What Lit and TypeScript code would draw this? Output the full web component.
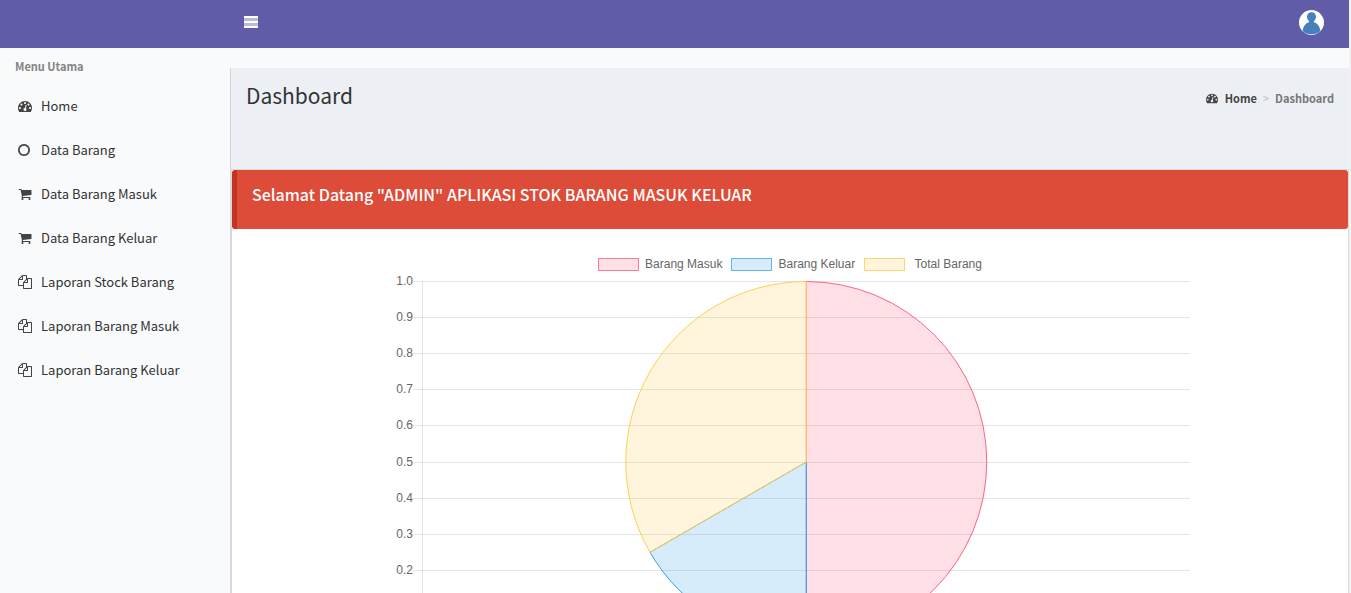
import { LitElement, html, svg, css } from "lit";
import { customElement } from "lit/decorators.js";

const ICONS = {
  dashboard:
    "M384 1152q0-53-37.5-90.5t-90.5-37.5-90.5 37.5-37.5 90.5 37.5 90.5 90.5 37.5 90.5-37.5 37.5-90.5zm192-448q0-53-37.5-90.5t-90.5-37.5-90.5 37.5-37.5 90.5 37.5 90.5 90.5 37.5 90.5-37.5 37.5-90.5zm428 481l101-382q6-26-7.5-48.5t-38.5-29.5-48 6.5-30 39.5l-101 382q-60 5-107 43.5t-63 98.5q-20 77 20 146t117 89 146-20 89-117q16-60-6-117t-72-91zm660-33q0-53-37.5-90.5t-90.5-37.5-90.5 37.5-37.5 90.5 37.5 90.5 90.5 37.5 90.5-37.5 37.5-90.5zm-640-640q0-53-37.5-90.5t-90.5-37.5-90.5 37.5-37.5 90.5 37.5 90.5 90.5 37.5 90.5-37.5 37.5-90.5zm448 192q0-53-37.5-90.5t-90.5-37.5-90.5 37.5-37.5 90.5 37.5 90.5 90.5 37.5 90.5-37.5 37.5-90.5zm320 448q0 261-141 483-19 29-54 29h-1402q-35 0-54-29-141-221-141-483 0-182 71-348t191-286 286-191 348-71 348 71 286 191 191 286 71 348z",
  circle:
    "M768 352q-148 0-273 73t-198 198-73 273 73 273 198 198 273 73 273-73 198-198 73-273-73-273-198-198-273-73zm768 544q0 209-103 385.500t-279.500 279.500-385.500 103-385.500-103-279.500-279.500-103-385.500 103-385.500 279.500-279.500 385.500-103 385.500 103 279.500 279.500 103 385.500z",
  cart:
    "M704 1536q0 52-38 90t-90 38-90-38-38-90 38-90 90-38 90 38 38 90zm896 0q0 52-38 90t-90 38-90-38-38-90 38-90 90-38 90 38 38 90zm128-1088v512q0 24-16.5 42.5t-40.500 21.5l-1044 122q13 60 13 70 0 16-24 64h920q26 0 45 19t19 45-19 45-45 19h-1024q-26 0-45-19t-19-45q0-11 8-31.500t16-36 21.500-40 15.500-29.500l-177-823h-204q-26 0-45-19t-19-45 19-45 45-19h256q16 0 28.500 6.500t19.500 15.500 13 24.500 8 26 5.500 29.500 4.500 26h1201q26 0 45 19t19 45z",
  files:
    "M1696 384q40 0 68 28t28 68v1216q0 40-28 68t-68 28h-960q-40 0-68-28t-28-68v-288h-544q-40 0-68-28t-28-68v-672q0-40 20-88t48-76l408-408q28-28 76-48t88-20h416q40 0 68 28t28 68v328q68-40 128-40h416zm-544 213l-299 299h299v-299zm-640-384l-299 299h299v-299zm196 647l316-316v-416h-384v416q0 40-28 68t-68 28h-416v640h512v-256q0-40 20-88t48-76zm956 804v-1152h-384v416q0 40-28 68t-68 28h-416v640h896z",
};

type IconName = keyof typeof ICONS;

const MENU: { icon: IconName; label: string }[] = [
  { icon: "dashboard", label: "Home" },
  { icon: "circle", label: "Data Barang" },
  { icon: "cart", label: "Data Barang Masuk" },
  { icon: "cart", label: "Data Barang Keluar" },
  { icon: "files", label: "Laporan Stock Barang" },
  { icon: "files", label: "Laporan Barang Masuk" },
  { icon: "files", label: "Laporan Barang Keluar" },
];

const SERIES = [
  { label: "Barang Masuk", value: 3, tone: "pink" },
  { label: "Barang Keluar", value: 1, tone: "blue" },
  { label: "\u00a0Total Barang", value: 2, tone: "yellow" },
];

const icon = (name: IconName) => html`
  <svg class="icon" viewBox="0 0 1792 1792" aria-hidden="true">
    <path d=${ICONS[name]}></path>
  </svg>
`;

@customElement("stock-chart")
export class StockChart extends LitElement {
  static styles = css`
    :host {
      display: block;
      width: 100%;
      max-width: 800px;
      font: 12px/14px "Liberation Sans", Arial, sans-serif;
      color: #666;
    }
    .legend {
      display: flex;
      justify-content: center;
      gap: 9px;
      margin: 0;
      padding: 0;
      list-style: none;
    }
    .entry {
      display: flex;
      gap: 6px;
      white-space: pre;
    }
    .swatch {
      box-sizing: border-box;
      width: 41px;
      height: 13px;
      margin-top: 1px;
      border: 1px solid;
    }
    .swatch.pink {
      background: #ffe0e6;
      border-color: #ff7a97;
    }
    .swatch.blue {
      background: #d7ecfb;
      border-color: #5eb5ef;
    }
    .swatch.yellow {
      background: #fff5dd;
      border-color: #ffd66e;
    }
    .plot {
      display: block;
      width: 100%;
      margin-top: 3px;
    }
    .grid {
      stroke: rgba(0, 0, 0, 0.1);
    }
    .tick {
      fill: #666;
      text-anchor: end;
    }
    .slice.pink {
      fill: rgba(255, 99, 132, 0.2);
      stroke: rgb(255, 99, 132);
    }
    .slice.blue {
      fill: rgba(54, 162, 235, 0.2);
      stroke: rgb(54, 162, 235);
    }
    .slice.yellow {
      fill: rgba(255, 206, 86, 0.2);
      stroke: rgb(255, 206, 86);
    }
  `;

  private slices() {
    const cx = 416.3;
    const cy = 188;
    const r = 180.5;
    const total = SERIES.reduce((sum, s) => sum + s.value, 0);
    let angle = -Math.PI / 2;
    return SERIES.map((s) => {
      const end = angle + (s.value / total) * Math.PI * 2;
      const at = (a: number) => `${cx + r * Math.cos(a)} ${cy + r * Math.sin(a)}`;
      const d = `M${cx} ${cy}L${at(angle)}A${r} ${r} 0 0 1 ${at(end)}Z`;
      angle = end;
      return svg`<path class="slice ${s.tone}" d=${d}></path>`;
    });
  }

  render() {
    const ticks = Array.from({ length: 11 }, (_, i) => ({
      y: 7.5 + Math.round(36.1 * i),
      text: (1 - i / 10).toFixed(1),
    }));
    return html`
      <ul class="legend">
        ${SERIES.map(
          (s) => html`<li class="entry"><span class="swatch ${s.tone}"></span><span>${s.label}</span></li>`
        )}
      </ul>
      <svg class="plot" viewBox="0 0 800 376" role="img" aria-label="Stok barang">
        ${ticks.map(
          (t) => svg`
            <line class="grid" x1="23" x2="800" y1=${t.y} y2=${t.y}></line>
            <text class="tick" x="23" y=${t.y + 3}>${t.text}</text>`
        )}
        <line class="grid" x1="32.5" x2="32.5" y1="7" y2="369"></line>
        ${this.slices()}
      </svg>
    `;
  }
}

@customElement("app-root")
export class AppRoot extends LitElement {
  static styles = css`
    :host {
      display: block;
      box-sizing: border-box;
      height: 100vh;
      padding-right: 2px;
      overflow-y: auto;
      scrollbar-width: none;
      background: #f1f1f1;
      color: #333;
      font: 13px/20px "Noto Sans CJK SC", "Noto Sans", sans-serif;
    }
    * {
      box-sizing: border-box;
    }
    a {
      color: inherit;
      text-decoration: none;
    }
    button {
      display: flex;
      padding: 0;
      border: 0;
      background: none;
      cursor: pointer;
    }
    .icon {
      flex: none;
      width: 14px;
      height: 14px;
      fill: #444;
      overflow: visible;
    }
    .topbar {
      display: flex;
      align-items: center;
      justify-content: space-between;
      height: 48px;
      padding: 0 25px 3px 244px;
      background: #605ca8;
    }
    .bars {
      width: 14px;
      height: 13px;
    }
    .avatar {
      width: 25px;
      height: 25px;
    }
    .body {
      display: grid;
      grid-template-columns: 230px minmax(0, 1fr);
      min-height: calc(100vh - 48px);
      background: #f9fafc;
    }
    .heading {
      margin: 0;
      padding: 8px 15px;
      color: #848484;
      font-size: 11px;
      font-weight: 700;
    }
    .menu {
      margin: 0;
      padding: 0;
      list-style: none;
    }
    .item {
      display: flex;
      align-items: center;
      gap: 9px;
      height: 44px;
      padding: 0 18px;
    }
    .content {
      margin-top: 20px;
      border-left: 1px solid #d2d6de;
      background: #ecf0f5;
    }
    .title {
      display: flex;
      align-items: flex-start;
      justify-content: space-between;
      height: 101px;
      padding: 14px 15px;
    }
    h1 {
      margin: 0;
      font-size: 21px;
      font-weight: 400;
      line-height: 26px;
    }
    .crumbs {
      display: flex;
      align-items: center;
      margin: 6px 0 0;
      padding: 0;
      list-style: none;
      color: #777;
      font-size: 11px;
      font-weight: 700;
    }
    .crumb {
      display: flex;
      align-items: center;
      gap: 7px;
      color: #444;
    }
    .crumb .icon {
      width: 12px;
      height: 12px;
    }
    .sep {
      padding: 0 6px;
      color: #bbb;
      font-weight: 400;
    }
    .panel {
      border: 1px solid #d8dadd;
      border-bottom: 0;
      background: #fff;
    }
    .callout {
      margin-bottom: 28px;
      padding: 14px 30px 25px 15px;
      border-left: 5px solid #c23321;
      border-radius: 3px;
      background: #dd4b39;
      color: #fff;
    }
    h2 {
      margin: 0;
      font-size: 16px;
      font-weight: 500;
      line-height: 20px;
    }
    stock-chart {
      margin: 0 auto;
    }
  `;

  render() {
    return html`
      <header class="topbar">
        <button aria-label="Menu">
          <svg class="bars" viewBox="0 0 14 13">
            <rect width="14" height="12" rx="1" fill="#bdbbdb"></rect>
            <path d="M0 1h14M0 6h14M0 11h14" stroke="#fff" stroke-width="2"></path>
          </svg>
        </button>
        <button aria-label="Profil">
          <svg class="avatar" viewBox="0 0 25 25">
            <circle cx="12.5" cy="12.5" r="12.5" fill="#fff"></circle>
            <path
              d="M12.500 2.200c2.700 0 4.500 1.900 4.500 4.500 0 2-.9 3.500-2 4.400v1.200c3.400.9 5.900 4.200 6.300 8.700-2 2.100-5 3.200-8.800 3.200s-6.800-1.100-8.800-3.200c.4-4.500 2.900-7.800 6.300-8.700v-1.200c-1.100-.9-2-2.400-2-4.400 0-2.600 1.800-4.500 4.500-4.500z"
              fill="#4580bd"
            ></path>
          </svg>
        </button>
      </header>
      <div class="body">
        <nav>
          <p class="heading">Menu Utama</p>
          <ul class="menu">
            ${MENU.map((m) => html`<li><a class="item" href="#">${icon(m.icon)}<span>${m.label}</span></a></li>`)}
          </ul>
        </nav>
        <main class="content">
          <div class="title">
            <h1>Dashboard</h1>
            <ol class="crumbs">
              <li><a class="crumb" href="#">${icon("dashboard")}<span>Home</span></a></li>
              <li class="sep" aria-hidden="true">&gt;</li>
              <li>Dashboard</li>
            </ol>
          </div>
          <section class="panel">
            <div class="callout"><h2>Selamat Datang "ADMIN" APLIKASI STOK BARANG MASUK KELUAR</h2></div>
            <stock-chart></stock-chart>
          </section>
        </main>
      </div>
    `;
  }
}
